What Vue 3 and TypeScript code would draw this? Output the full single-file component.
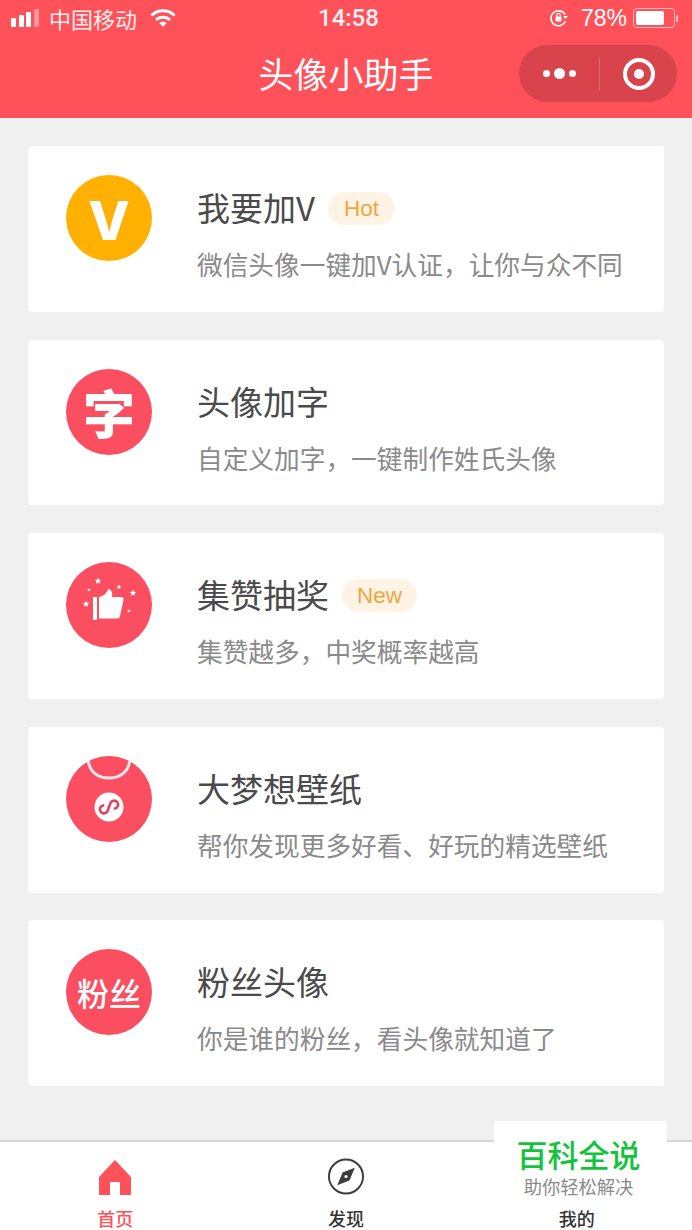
<script setup lang="ts">
interface Feature {
  icon: string;
  title: string;
  desc: string;
  tag?: string;
}

const features: Feature[] = [
  { icon: "v", title: "我要加V", desc: "微信头像一键加V认证，让你与众不同", tag: "Hot" },
  { icon: "zi", title: "头像加字", desc: "自定义加字，一键制作姓氏头像" },
  { icon: "like", title: "集赞抽奖", desc: "集赞越多，中奖概率越高", tag: "New" },
  { icon: "shirt", title: "大梦想壁纸", desc: "帮你发现更多好看、好玩的精选壁纸" },
  { icon: "fans", title: "粉丝头像", desc: "你是谁的粉丝，看头像就知道了" },
];

// five pointed star around x, y with outer radius r
function star(x: number, y: number, r: number): string {
  const pts: string[] = [];
  for (let i = 0; i < 10; i++) {
    const len = i % 2 === 0 ? r : r * 0.42;
    const a = (Math.PI / 5) * i - Math.PI / 2;
    pts.push(`${(x + len * Math.cos(a)).toFixed(2)},${(y + len * Math.sin(a)).toFixed(2)}`);
  }
  return pts.join(" ");
}

const stars = [
  star(32, 19, 3.6),
  star(23, 28, 2),
  star(53, 25, 2.6),
  star(67, 31, 3.6),
  star(20, 42, 3.6),
  star(63, 49, 2),
];
</script>

<template>
  <div class="page">
    <header class="head">
      <div class="status">
        <div class="status-left">
          <span class="signal"><i></i><i></i><i></i><i></i></span>
          <span class="carrier">中国移动</span>
          <svg class="wifi" width="26" height="18" viewBox="0 0 26 18">
            <path d="M1.500 6.500a16.500 16.500 0 0 1 23 0" fill="none" stroke="#fff" stroke-width="3" />
            <path d="M6 11a10 10 0 0 1 14 0" fill="none" stroke="#fff" stroke-width="3" />
            <path d="M13 18l-3.600-4a5 5 0 0 1 7.200 0z" fill="#fff" />
          </svg>
        </div>
        <span class="time">14:58</span>
        <div class="status-right">
          <svg class="lock" width="20" height="20" viewBox="0 0 20 20">
            <path d="M16 6.500A7.500 7.500 0 1 0 16.500 13" fill="none" stroke="#fff" stroke-width="1.600" />
            <path d="M14 8h5l-2.500 3z" fill="#fff" />
            <rect x="6.500" y="8.500" width="6" height="5" rx="1" fill="#fff" />
            <path d="M7.800 8.500V7a1.700 1.700 0 0 1 3.400 0v1.500" fill="none" stroke="#fff" stroke-width="1.200" />
          </svg>
          <span class="percent">78%</span>
          <span class="battery"><b></b></span>
          <span class="battery-tip"></span>
        </div>
      </div>
      <div class="nav">
        <h1>头像小助手</h1>
        <div class="capsule">
          <span class="dots"><i></i><i class="big"></i><i></i></span>
          <span class="divider"></span>
          <span class="target"><i></i></span>
        </div>
      </div>
    </header>

    <main class="list">
      <div v-for="item in features" :key="item.title" class="card">
        <div class="icon" :class="item.icon">
          <span v-if="item.icon === 'v'" class="icon-v">V</span>
          <span v-else-if="item.icon === 'zi'" class="icon-zi">字</span>
          <span v-else-if="item.icon === 'fans'" class="icon-fans">粉丝</span>
          <svg v-else-if="item.icon === 'like'" width="86" height="86" viewBox="0 0 86 86">
            <polygon v-for="(s, i) in stars" :key="i" :points="s" fill="#fff" />
            <rect x="27" y="35" width="4" height="23" fill="#fff" />
            <path d="M33 35C38 34 41 31 42 27C45 27 47 30 46 35H55C57 35 58 36 57.500 38L54 54C53.500 56 52.500 56.500 51 56.500H33Z" fill="#fff" />
          </svg>
          <svg v-else width="86" height="86" viewBox="0 0 86 86">
            <path d="M22 3c1 13 10 19 21 19s20-6 21-19" fill="none" stroke="#fbe4e6" stroke-width="3" />
            <circle cx="43" cy="51" r="14.500" fill="#fff" />
            <path d="M37 51.500A4 4 0 1 0 43 55V47A4 4 0 1 1 49 50.500" transform="rotate(20 43 51)" fill="none" stroke="#e8405c" stroke-width="2.600" stroke-linecap="round" />
          </svg>
        </div>
        <div class="text">
          <div class="title-row">
            <span class="title">{{ item.title }}</span>
            <span v-if="item.tag" class="tag">{{ item.tag }}</span>
          </div>
          <p class="desc">{{ item.desc }}</p>
        </div>
      </div>
    </main>

    <footer class="tabs">
      <div class="tab active">
        <svg width="32" height="37" viewBox="0 0 32 37">
          <path d="M16 2L32 19V36C32 36.600 31.600 37 31 37H21V24H11V37H1C.4 37 0 36.600 0 36V19z" fill="#ff5159" />
        </svg>
        <span>首页</span>
      </div>
      <div class="tab">
        <svg width="38" height="37" viewBox="0 0 38 38">
          <circle cx="19" cy="19" r="17.500" fill="none" stroke="#3c3c3c" stroke-width="2" />
          <path d="M28 10L22.500 23L10 28L15.500 15z" fill="#3c3c3c" />
          <circle cx="19" cy="19" r="1.600" fill="#fff" />
        </svg>
        <span>发现</span>
      </div>
      <div class="tab">
        <div class="tab-space"></div>
        <span>我的</span>
      </div>
      <div class="watermark">
        <strong>百科全说</strong>
        <small>助你轻松解决</small>
      </div>
    </footer>
  </div>
</template>

<style scoped>
.page {
  position: relative;
  width: 692px;
  height: 1230px;
  overflow: hidden;
  background: #f0f0f0;
  font-family: "Noto Sans CJK SC", "Liberation Sans", sans-serif;
}

.head {
  height: 118px;
  background: #ff5159;
  color: #fff;
}

.status {
  position: relative;
  display: flex;
  align-items: center;
  justify-content: space-between;
  height: 40px;
  padding: 0 14px 4px 11px;
  box-sizing: border-box;
}

.status-left,
.status-right {
  display: flex;
  align-items: center;
}

.signal {
  display: flex;
  align-items: flex-end;
  gap: 2.5px;
  margin-right: 10.5px;
}

.signal i {
  display: block;
  width: 5px;
  border-radius: 1px;
  background: #fff;
}

.signal i:nth-child(1) { height: 9px; }
.signal i:nth-child(2) { height: 12px; }
.signal i:nth-child(3) { height: 15px; }
.signal i:nth-child(4) { height: 18px; background: rgba(255, 255, 255, 0.4); }

.carrier {
  font-size: 22px;
  opacity: 0.9;
  margin-right: 13px;
}

.time {
  position: absolute;
  left: 318px;
  font-family: Roboto, "Liberation Sans", sans-serif;
  font-size: 24px;
  font-weight: 500;
  opacity: 0.92;
}

.lock {
  margin-right: 12px;
}

.percent {
  font-family: "Liberation Sans", sans-serif;
  font-size: 23px;
  margin-right: 6px;
}

.battery {
  display: block;
  width: 42px;
  height: 20px;
  padding: 2px;
  box-sizing: border-box;
  border: 1px solid rgba(255, 255, 255, 0.6);
  border-radius: 4px;
}

.battery b {
  display: block;
  width: 78%;
  height: 100%;
  border-radius: 2px;
  background: #fff;
}

.battery-tip {
  width: 2px;
  height: 7px;
  margin-left: 1px;
  background: rgba(255, 255, 255, 0.6);
}

.nav {
  position: relative;
  display: flex;
  justify-content: center;
  align-items: center;
  height: 68px;
  padding-bottom: 4px;
  box-sizing: border-box;
}

.nav h1 {
  margin: 0;
  font-size: 35px;
  font-weight: 400;
  line-height: 1;
}

.capsule {
  position: absolute;
  right: 15px;
  top: 5px;
  display: flex;
  align-items: center;
  width: 158px;
  height: 57px;
  border-radius: 29px;
  background: #d8434c;
}

.dots {
  display: flex;
  align-items: center;
  justify-content: center;
  gap: 4px;
  width: 80px;
}

.dots i {
  width: 7px;
  height: 7px;
  border-radius: 50%;
  background: #fff;
}

.dots i.big {
  width: 11px;
  height: 11px;
}

.divider {
  width: 1px;
  height: 34px;
  background: rgba(255, 255, 255, 0.2);
}

.target {
  display: flex;
  align-items: center;
  justify-content: center;
  flex: 1;
}

.target i {
  display: flex;
  width: 32px;
  height: 32px;
  box-sizing: border-box;
  border: 4px solid #fff;
  border-radius: 50%;
}

.target i::after {
  content: "";
  width: 10px;
  height: 10px;
  margin: auto;
  border-radius: 50%;
  background: #fff;
}

.list {
  display: flex;
  flex-direction: column;
  gap: 27.8px;
  padding: 28px 28px 0;
}

.card {
  display: flex;
  align-items: flex-start;
  height: 165.8px;
  padding: 29px 0 0 38px;
  box-sizing: border-box;
  border-radius: 4px;
  background: #fff;
}

.icon {
  display: flex;
  align-items: center;
  justify-content: center;
  flex: none;
  width: 86px;
  height: 86px;
  margin-right: 45px;
  border-radius: 50%;
  overflow: hidden;
  background: #fb4e60;
  color: #fff;
}

.icon.v {
  background: #ffb000;
}

.icon-v {
  font-family: Inter, "Liberation Sans", sans-serif;
  font-size: 54px;
  font-weight: 800;
  line-height: 1;
  transform: translateY(3px);
}

.icon-zi {
  font-size: 52px;
  font-weight: 900;
  line-height: 1;
}

.icon-fans {
  font-size: 32px;
  font-weight: 500;
  line-height: 1;
}

.text {
  min-width: 0;
  padding-top: 10px;
}

.title-row {
  display: flex;
  align-items: center;
  height: 44px;
  margin-bottom: 16px;
}

.title {
  font-size: 33px;
  color: #4a4a4a;
  line-height: 44px;
}

.tag {
  min-width: 67px;
  margin-left: 13px;
  padding: 0 15px;
  height: 33px;
  box-sizing: border-box;
  border-radius: 17px;
  background: #fff3e6;
  color: #efa63c;
  font-family: "Liberation Sans", sans-serif;
  font-size: 22.5px;
  line-height: 33px;
  text-align: center;
  transform: translateY(1px);
}

.desc {
  margin: 0;
  font-size: 25.7px;
  line-height: 38px;
  color: #8a8a8a;
  white-space: nowrap;
}

.tabs {
  position: absolute;
  left: 0;
  right: 0;
  bottom: 0;
  display: flex;
  height: 88px;
  border-top: 2px solid #d6d6d6;
  background: #fff;
}

.tab {
  display: flex;
  flex: 1;
  flex-direction: column;
  align-items: center;
  padding-top: 16px;
  font-size: 18px;
  font-weight: 500;
  color: #333;
}

.tab svg {
  display: block;
}

.tab-space {
  height: 37px;
}

.tab span {
  margin-top: 11px;
  line-height: 24px;
}

.tab.active {
  color: #ff5159;
}

.watermark {
  position: absolute;
  left: 494px;
  top: -21px;
  display: flex;
  flex-direction: column;
  align-items: center;
  width: 173px;
  height: 82px;
  padding: 14px 4px 0 0;
  box-sizing: border-box;
  background: #fff;
}

.watermark strong {
  font-size: 31px;
  line-height: 38px;
  font-weight: 500;
  color: #12c43a;
}

.watermark small {
  margin-top: 1px;
  font-size: 18.3px;
  line-height: 24px;
  color: #8a8a8a;
}
</style>
